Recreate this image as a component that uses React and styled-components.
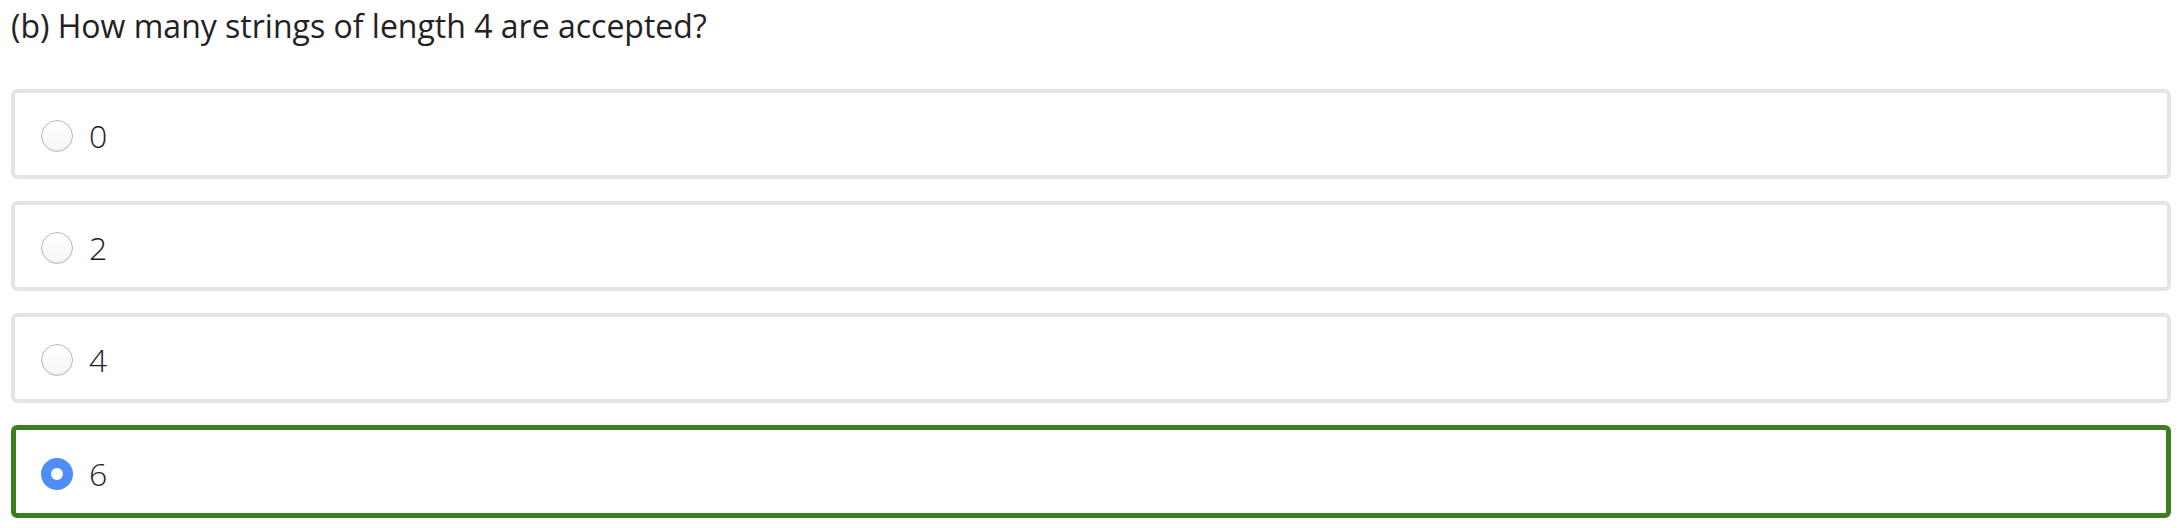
import styled, { createGlobalStyle } from 'styled-components';
import { useState } from 'react';

const GlobalStyle = createGlobalStyle`
    body {
        margin: 0;
        background: #ffffff;
        font-family: "Open Sans", "Noto Sans", sans-serif;
        color: #222222;
    }
`;

const Page = styled.div`
    padding: 4px 11px 0 11px;
`;

const Question = styled.h2`
    margin: 0 0 41px 0;
    font-size: 32px;
    font-weight: 400;
    line-height: 44px;
`;

const Options = styled.div`
    display: flex;
    flex-direction: column;
    gap: 22px;
`;

const Option = styled.label`
    display: flex;
    align-items: center;
    gap: 16px;
    height: ${props => (props.selected ? '79px' : '78px')};
    padding: 4px 0 0 ${props => (props.selected ? '25px' : '26px')};
    border: ${props => (props.selected ? '5px solid #3b7f22' : '4px solid #e4e4e4')};
    border-radius: 6px;
    cursor: pointer;
    box-sizing: content-box;
`;

// radio circle, drawn so it looks the same everywhere
const Radio = styled.span`
    width: 32px;
    height: 32px;
    border-radius: 50%;
    box-sizing: border-box;
    flex-shrink: 0;
    display: flex;
    align-items: center;
    justify-content: center;
    background: ${props => (props.checked ? '#4f8ef6' : 'linear-gradient(#ffffff, #f6f6f6)')};
    border: ${props => (props.checked ? 'none' : '1.5px solid #b9b9b9')};
    box-shadow: ${props => (props.checked ? 'none' : 'inset 0 -1px 2px rgba(0,0,0,0.08)')};

    &::after {
        content: '';
        display: ${props => (props.checked ? 'block' : 'none')};
        width: 12px;
        height: 12px;
        border-radius: 50%;
        background: #ffffff;
    }
`;

const Value = styled.span`
    font-size: 32px;
    font-weight: 300;
    line-height: 1;
    color: #1e1e1e;
`;

const answers = ['0', '2', '4', '6'];

export default function App() {
    const [picked, setPicked] = useState('6');

    return (
        <>
            <GlobalStyle />
            <Page>
                <Question>(b) How many strings of length 4 are accepted?</Question>
                <Options>
                    {answers.map(a => (
                        <Option key={a} selected={picked === a} onClick={() => setPicked(a)}>
                            <Radio checked={picked === a} />
                            <Value>{a}</Value>
                        </Option>
                    ))}
                </Options>
            </Page>
        </>
    );
}
